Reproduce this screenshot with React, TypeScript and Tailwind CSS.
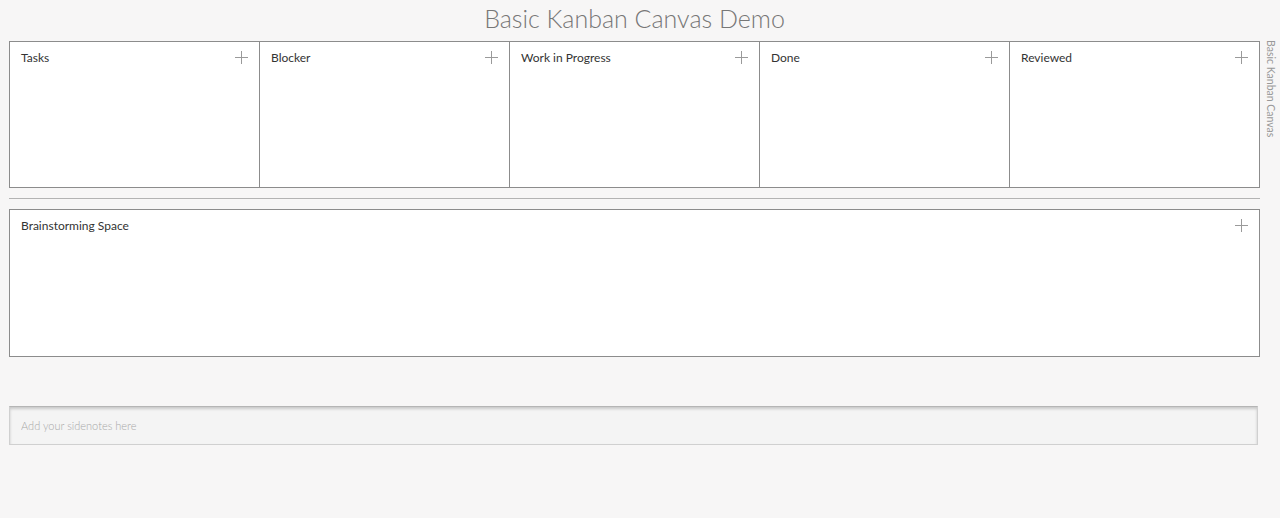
import React from 'react';

const columns = ['Tasks', 'Blocker', 'Work in Progress', 'Done', 'Reviewed'];

const PlusIcon = () => (
  <svg width="13" height="13" viewBox="0 0 13 13" className="text-[#9a9a9a] -mt-px">
    <path d="M6.5 0v13M0 6.5h13" stroke="currentColor" strokeWidth="1" fill="none" />
  </svg>
);

const Lane: React.FC<{ title: string; className?: string }> = ({ title, className }) => (
  <div className={`bg-white border-[#8c8c8c] h-full ${className ?? ''}`}>
    <div className="flex items-center justify-between pl-[11px] pr-[11px] pt-[7px]">
      <span className="text-[12px] text-[#333]">{title}</span>
      <PlusIcon />
    </div>
  </div>
);

const App: React.FC = () => {
  return (
    <div
      className="min-h-[518px] w-full bg-[#f7f6f6] flex"
      style={{ fontFamily: 'Lato, "Noto Sans", sans-serif' }}
    >
      <div className="w-[1251px] ml-[9px] flex flex-col">
        {/* Header */}
        <h1 className="h-[41px] text-center text-[25px] font-light leading-[37px] text-[#777]">
          Basic Kanban Canvas Demo
        </h1>

        {/* Kanban lanes */}
        <div className="grid grid-cols-[250px_250px_250px_250px_251px] h-[147px]">
          {columns.map((c, i) => (
            <Lane
              key={c}
              title={c}
              className={i === columns.length - 1 ? 'border' : 'border-y border-l'}
            />
          ))}
        </div>

        <div className="h-px bg-[#b3b3b3] mt-[10px] mb-[10px]" />

        {/* Brainstorming */}
        <div className="h-[148px]">
          <Lane title="Brainstorming Space" className="border" />
        </div>

        {/* Sidenotes */}
        <div className="mt-[49px] w-[1249px]">
          <input
            type="text"
            placeholder="Add your sidenotes here"
            className="w-full h-[39px] bg-[#f4f4f4] border border-[#d0d0d0] border-t-[#b5b5b5] shadow-[inset_0_2px_3px_rgba(0,0,0,0.18)] px-[11px] text-[11px] font-light text-[#555] placeholder-[#a8a8a8] outline-none"
          />
        </div>
      </div>

      {/* Side label */}
      <div className="pt-[40px] pl-[5px]">
        <span className="[writing-mode:vertical-rl] text-[10.5px] text-[#999] leading-none">
          Basic Kanban Canvas
        </span>
      </div>
    </div>
  );
};

export default App;
